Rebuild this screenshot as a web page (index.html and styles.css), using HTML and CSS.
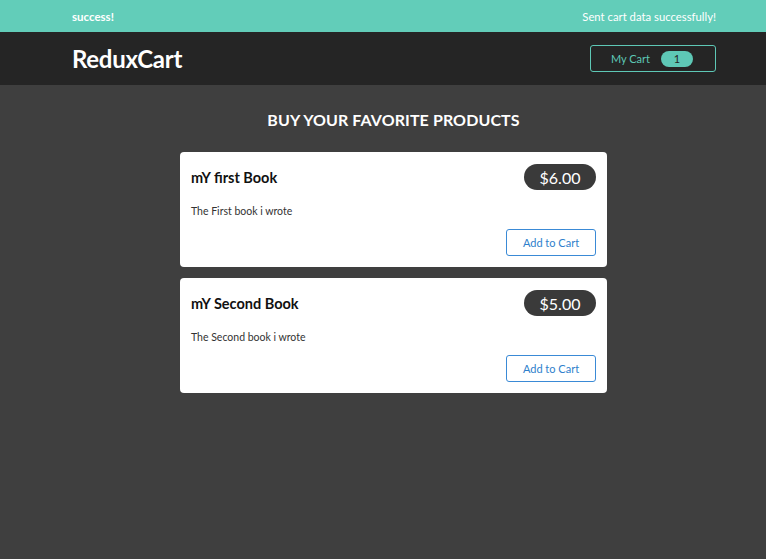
FILE: index.html
```html
<!DOCTYPE html>
<html lang="en">
<head>
<meta charset="utf-8">
<title>ReduxCart</title>
<link rel="stylesheet" href="styles.css">
</head>
<body>
  <section class="notification">
    <div class="wrap notification-row">
      <h2 class="note-title">success!</h2>
      <p class="note-msg">Sent cart data successfully!</p>
    </div>
  </section>
  <header class="header">
    <div class="wrap header-row">
      <h1 class="logo">ReduxCart</h1>
      <button class="cart-btn"><span>My Cart</span><span class="badge">1</span></button>
    </div>
  </header>
  <main class="main">
    <div class="wrap">
      <section class="products">
        <h2 class="products-title">BUY YOUR FAVORITE PRODUCTS</h2>
        <ul class="list">
          <li class="card">
            <header class="card-head">
              <h3 class="card-title">mY first Book</h3>
              <div class="price">$6.00</div>
            </header>
            <p class="desc">The First book i wrote</p>
            <div class="actions"><button class="add-btn">Add to Cart</button></div>
          </li>
          <li class="card">
            <header class="card-head">
              <h3 class="card-title">mY Second Book</h3>
              <div class="price">$5.00</div>
            </header>
            <p class="desc">The Second book i wrote</p>
            <div class="actions"><button class="add-btn">Add to Cart</button></div>
          </li>
        </ul>
      </section>
    </div>
  </main>
</body>
</html>
```
FILE: styles.css
```css
* { box-sizing: border-box; }
html, body { margin: 0; padding: 0; height: 100%; }
body {
  font-family: "Lato", "Open Sans", sans-serif;
  background: #3f3f3f;
  display: flex;
  flex-direction: column;
}
.wrap { width: 644px; margin-left: 72px; }
.notification { background: #62cdb9; color: #fff; height: 32px; }
.notification-row { height: 32px; display: flex; align-items: center; justify-content: space-between; }
.note-title { margin: 0; font-size: 11.5px; font-weight: 700; }
.note-msg { margin: 0; font-size: 11.3px; }
.header { background: #252525; height: 53px; }
.header-row { height: 53px; display: flex; align-items: center; justify-content: space-between; }
.logo { margin: 0; color: #fff; font-size: 24px; font-weight: 700; letter-spacing: -0.3px; }
.cart-btn {
  font-family: inherit;
  width: 126px; height: 27px;
  background: transparent;
  border: 1px solid #5ec8b6;
  border-radius: 3px;
  color: #5ec8b6;
  font-size: 11px;
  display: flex; align-items: center; justify-content: center; gap: 11px;
  padding: 0 2px 0 0;
}
.badge {
  background: #5ec8b6; color: #252525;
  width: 32px; height: 16px; border-radius: 8px;
  display: flex; align-items: center; justify-content: center;
  font-size: 11px;
}
.main { flex: 1; }
.products { width: 427px; margin-left: 108px; padding-top: 26px; }
.products-title { margin: 0 0 23px; text-align: center; color: #fff; font-size: 16px; font-weight: 700; line-height: 18px; letter-spacing: 0.1px; }
.list { list-style: none; margin: 0; padding: 0; display: flex; flex-direction: column; gap: 11px; }
.card { background: #fff; border-radius: 4px; height: 115px; padding: 12px 11px 10px 11px; }
.card-head { display: flex; align-items: center; justify-content: space-between; }
.card-title { margin: 0; font-size: 14.5px; font-weight: 700; color: #111; }
.price {
  background: #3a3a3a; color: #fff; border-radius: 13px;
  height: 26px; width: 72px;
  display: flex; align-items: center; justify-content: center;
  font-size: 16px;
}
.desc { margin: 14px 0 0; font-size: 10.5px; color: #333; line-height: 14px; }
.actions { display: flex; justify-content: flex-end; margin-top: 11px; }
.add-btn {
  font-family: inherit;
  width: 90px; height: 27px;
  background: #fff; color: #2f7fcc;
  border: 1px solid #3a8ad6; border-radius: 3px;
  font-size: 11px;
}
```
